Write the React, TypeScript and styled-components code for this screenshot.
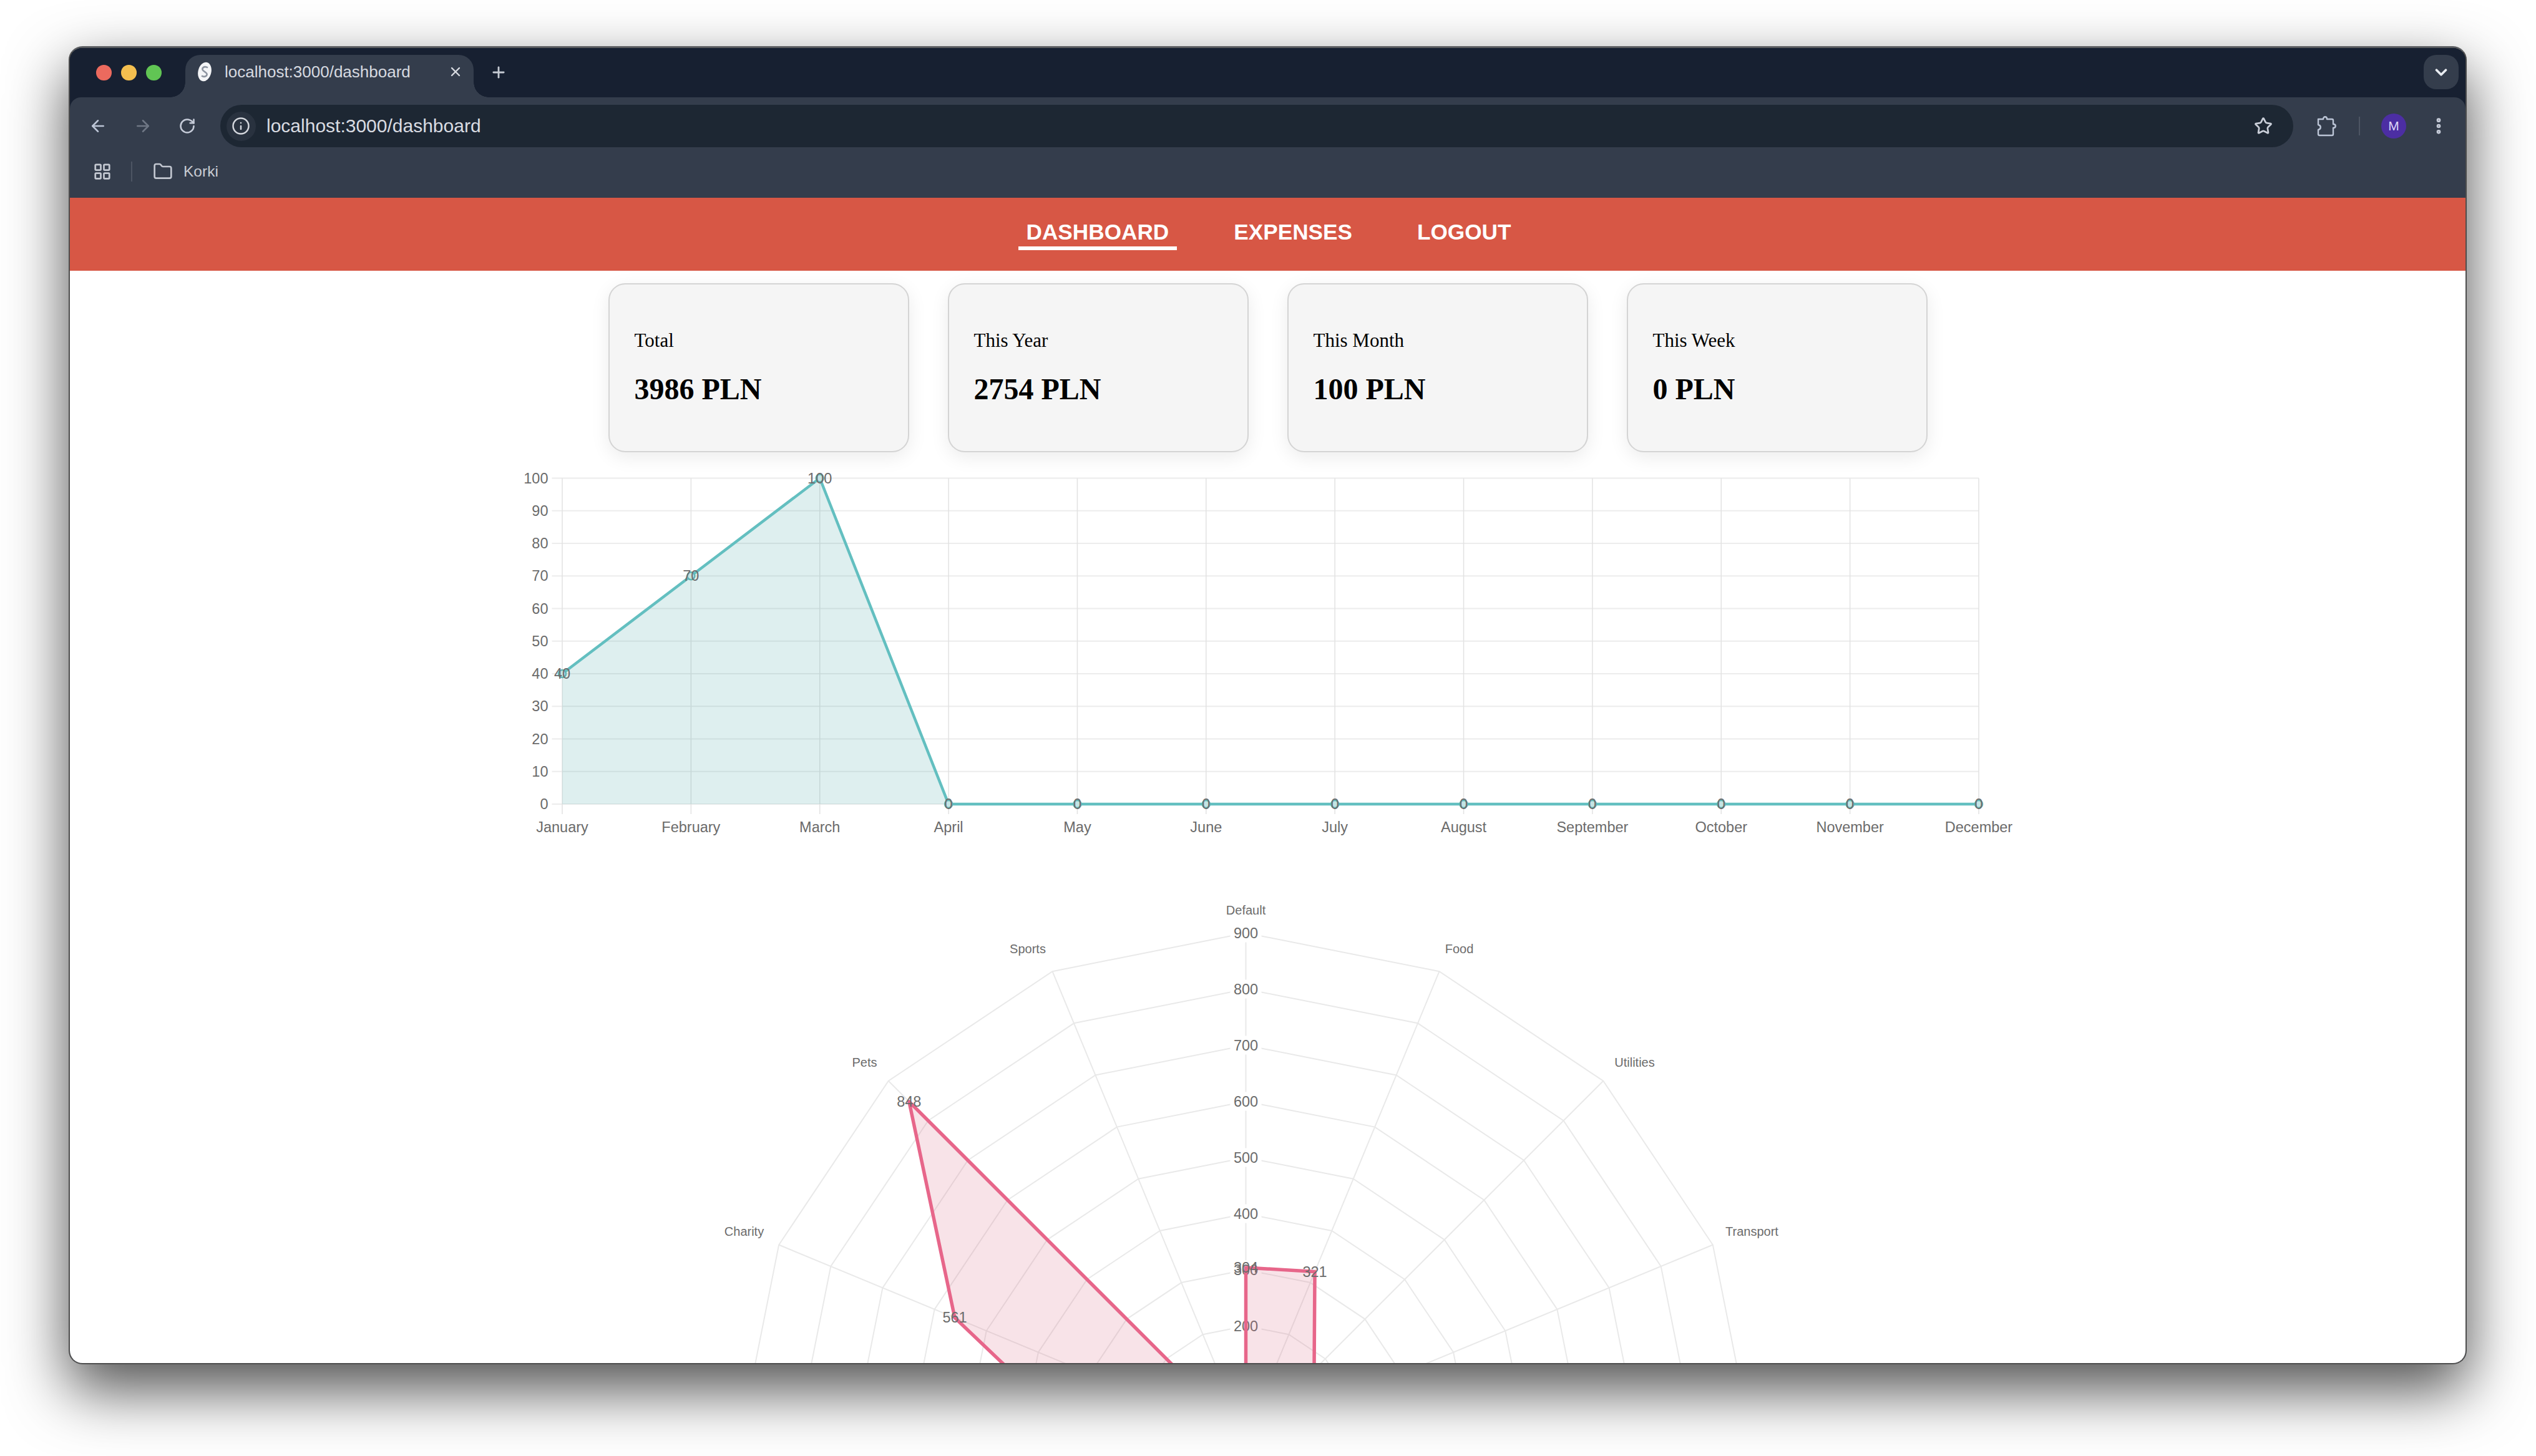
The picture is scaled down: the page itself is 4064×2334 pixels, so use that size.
import { styled, createGlobalStyle } from "styled-components";
import {
  ArrowLeft,
  ArrowRight,
  ChevronDown,
  EllipsisVertical,
  Folder,
  Info,
  LayoutGrid,
  Plus,
  RotateCw,
  Star,
  X,
} from "lucide-react";

const months = [
  "January",
  "February",
  "March",
  "April",
  "May",
  "June",
  "July",
  "August",
  "September",
  "October",
  "November",
  "December",
];
const monthly = [40, 70, 100, 0, 0, 0, 0, 0, 0, 0, 0, 0];
const stats = [
  { label: "Total", value: "3986 PLN" },
  { label: "This Year", value: "2754 PLN" },
  { label: "This Month", value: "100 PLN" },
  { label: "This Week", value: "0 PLN" },
];

// line chart geometry, in page pixels
const plotLeft = 900.5;
const plotRight = 3170.5;
const plotTop = 766.5;
const plotBottom = 1289;
const xAt = (i: number) => plotLeft + ((plotRight - plotLeft) * i) / 11;
const yAt = (v: number) => plotBottom - ((plotBottom - plotTop) * v) / 100;

// radar geometry, the window cuts it off at y = 2185
const cx = 1996;
const cy = 2305.5;
const perUnit = 0.9;
const spokes = 16;
const radarCut = 2170;
const radarPoint = (spoke: number, value: number) => {
  const a = (spoke * 2 * Math.PI) / spokes;
  return {
    x: cx + Math.sin(a) * value * perUnit,
    y: cy - Math.cos(a) * value * perUnit,
  };
};
const radarValues = [304, 321, 172, 0, 0, 0, 0, 0, 0, 0, 0, 0, 293, 561, 848, 0];
const radarShape = radarValues
  .map((v, i) => {
    const p = radarPoint(i, v);
    return `${p.x},${p.y}`;
  })
  .join(" ");
const ringPoints = (value: number) =>
  Array.from({ length: spokes }, (_, i) => {
    const p = radarPoint(i, value);
    return `${p.x},${p.y}`;
  }).join(" ");
const radarTicks = [100, 200, 300, 400, 500, 600, 700, 800, 900];
const radarLabels = [
  { name: "Default", x: 1996, y: 1459 },
  { name: "Food", x: 2338, y: 1521 },
  { name: "Utilities", x: 2619, y: 1703 },
  { name: "Transport", x: 2807, y: 1973.5 },
  { name: "Charity", x: 1192, y: 1973.5 },
  { name: "Pets", x: 1385, y: 1703 },
  { name: "Sports", x: 1646.5, y: 1521 },
];

const App = () => {
  return (
    <Page>
      <GlobalStyle />
      <BrowserWindow>
        <TitleStrip>
          <Lights>
            <Light $color="#ec6a5e" />
            <Light $color="#f4bf4f" />
            <Light $color="#61c554" />
          </Lights>
          <Tab>
            <svg width="24" height="32" viewBox="0 0 24 32">
              <ellipse cx="12" cy="16" rx="10.5" ry="15.5" fill="#f4f5f7" transform="rotate(14 12 16)" />
              <path
                d="M17 9.5C11 6 5.5 11 10 14.5L14 17.5C18.5 21 13 26 7 22.5"
                fill="none"
                stroke="#8d94a0"
                strokeWidth="2.6"
              />
            </svg>
            <TabTitle>localhost:3000/dashboard</TabTitle>
            <TabClose>
              <X size={24} strokeWidth={2.4} />
            </TabClose>
          </Tab>
          <NewTab>
            <Plus size={28} strokeWidth={2.4} />
          </NewTab>
          <TabSearch>
            <ChevronDown size={30} strokeWidth={3} />
          </TabSearch>
        </TitleStrip>
        <Toolbar>
          <AddressRow>
            <ToolIcon $color="#bcc5d6" $left={30}>
              <ArrowLeft size={30} strokeWidth={2} />
            </ToolIcon>
            <ToolIcon $color="#6f7785" $left={42}>
              <ArrowRight size={30} strokeWidth={2} />
            </ToolIcon>
            <ToolIcon $color="#c5cbd8" $left={42}>
              <RotateCw size={28} strokeWidth={2.2} />
            </ToolIcon>
            <Omnibox>
              <InfoChip>
                <Info size={30} strokeWidth={2} />
              </InfoChip>
              <Url>localhost:3000/dashboard</Url>
              <ToolIcon $color="#c9ced8" $left={0}>
                <Star size={30} strokeWidth={2.2} />
              </ToolIcon>
            </Omnibox>
            <ToolIcon $color="#bcc5d6" $left={37}>
              <svg width="32" height="36" viewBox="0 0 32 36" fill="none" stroke="currentColor" strokeWidth="2.4">
                <path d="M3 7H11C11 2 17 2 17 7H25C26.5 7 27 8 27 9V15C32 15 32 21 27 21V31C27 32.5 26 33 25 33H5C3.5 33 3 32 3 31V24C8 23 8 17 3 16Z" strokeLinejoin="round" />
              </svg>
            </ToolIcon>
            <VerticalRule $left={36} $height={30} />
            <Avatar>M</Avatar>
            <ToolIcon $color="#c5cbd8" $left={36}>
              <EllipsisVertical size={32} strokeWidth={3} />
            </ToolIcon>
          </AddressRow>
          <BookmarkRow>
            <ToolIcon $color="#c2c7d0" $left={0}>
              <LayoutGrid size={30} strokeWidth={2.2} />
            </ToolIcon>
            <VerticalRule $left={31} $height={32} />
            <ToolIcon $color="#c2c7d0" $left={33}>
              <Folder size={32} strokeWidth={2} />
            </ToolIcon>
            <BookmarkName>Korki</BookmarkName>
          </BookmarkRow>
        </Toolbar>
        <Content>
          <NavBar>
            <NavLink $active>DASHBOARD</NavLink>
            <NavLink>EXPENSES</NavLink>
            <NavLink>LOGOUT</NavLink>
          </NavBar>
          <CardRow>
            {stats.map((s) => (
              <Card key={s.label}>
                <CardLabel>{s.label}</CardLabel>
                <CardValue>{s.value}</CardValue>
              </Card>
            ))}
          </CardRow>
          <LineChart width="2500" height="620" viewBox="781.5 740 2500 620">
            {Array.from({ length: 11 }, (_, i) => (
              <g key={i}>
                <GridLine x1={884} x2={plotRight} y1={yAt(i * 10)} y2={yAt(i * 10)} />
                <ChartText x={878} y={yAt(i * 10)} textAnchor="end" dominantBaseline="central">
                  {i * 10}
                </ChartText>
              </g>
            ))}
            {months.map((m, i) => (
              <g key={m}>
                <GridLine $vertical x1={xAt(i)} x2={xAt(i)} y1={plotTop} y2={1305} />
                <ChartText x={xAt(i)} y={1326} textAnchor="middle" dominantBaseline="central">
                  {m}
                </ChartText>
              </g>
            ))}
            <polygon
              points={`${plotLeft},${plotBottom} ${monthly.map((v, i) => `${xAt(i)},${yAt(v)}`).join(" ")}`}
              fill="rgba(90,175,175,0.2)"
            />
            <polyline
              points={monthly.map((v, i) => `${xAt(i)},${yAt(v)}`).join(" ")}
              fill="none"
              stroke="#63bfc0"
              strokeWidth="4.5"
            />
            {monthly.map((v, i) => (
              <g key={i}>
                <circle cx={xAt(i)} cy={yAt(v)} r="6" fill="#c4e4e4" stroke="#5fb5b6" strokeWidth="2.5" />
                <ChartText x={xAt(i)} y={yAt(v)} textAnchor="middle" dominantBaseline="central">
                  {v}
                </ChartText>
              </g>
            ))}
          </LineChart>
          <RadarChart width="2500" height="800" viewBox="781.5 1420 2500 800">
            {Array.from({ length: spokes }, (_, i) => {
              const p = radarPoint(i, 900);
              return <RadarGrid as="line" key={i} x1={cx} y1={cy} x2={p.x} y2={p.y} />;
            })}
            {radarTicks.map((t) => (
              <RadarGrid as="polygon" key={t} points={ringPoints(t)} fill="none" />
            ))}
            {radarTicks
              .filter((t) => cy - t * perUnit < radarCut)
              .map((t) => (
                <g key={t}>
                  <rect x={cx - 25} y={cy - t * perUnit - 15} width="50" height="30" fill="#fff" />
                  <ChartText x={cx} y={cy - t * perUnit} textAnchor="middle" dominantBaseline="central">
                    {t}
                  </ChartText>
                </g>
              ))}
            {radarLabels.map((l) => (
              <PointLabel key={l.name} x={l.x} y={l.y} textAnchor="middle" dominantBaseline="central">
                {l.name}
              </PointLabel>
            ))}
            <polygon
              points={radarShape}
              fill="rgba(215,100,125,0.18)"
              stroke="#e7668a"
              strokeWidth="5.5"
              strokeLinejoin="round"
            />
            {radarValues.map((v, i) => {
              const p = radarPoint(i, v);
              if (v === 0 || p.y > radarCut) return null;
              return (
                <ChartText key={i} x={p.x} y={p.y} textAnchor="middle" dominantBaseline="central">
                  {v}
                </ChartText>
              );
            })}
          </RadarChart>
        </Content>
      </BrowserWindow>
    </Page>
  );
};

export default App;

const GlobalStyle = createGlobalStyle`
  html, body {
    margin: 0;
    padding: 0;
    background: #ffffff;
  }
`;

const Page = styled.div`
  width: 4064px;
  height: 2334px;
  box-sizing: border-box;
  padding: 74px 111px 147px 110px;
  overflow: hidden;
  font-family: "Liberation Sans", Arial, sans-serif;
`;

const BrowserWindow = styled.div`
  display: flex;
  flex-direction: column;
  height: 2113px;
  box-sizing: border-box;
  border: 2px solid #4d4d4d;
  border-top: 3px solid #5a5c60;
  border-radius: 22px;
  overflow: hidden;
  background: #172031;
  box-shadow: 0 40px 96px 2px rgba(0, 0, 0, 0.68);
`;

const TitleStrip = styled.div`
  display: flex;
  align-items: flex-end;
  height: 79px;
  flex-shrink: 0;
  background: #172031;
`;

const Lights = styled.div`
  display: flex;
  align-self: flex-start;
  gap: 15.5px;
  margin: 27px 0 0 42px;
`;

const Light = styled.span<{ $color: string }>`
  width: 24.5px;
  height: 24.5px;
  border-radius: 50%;
  background: ${(p) => p.$color};
`;

const Tab = styled.div`
  position: relative;
  display: flex;
  align-items: center;
  box-sizing: border-box;
  width: 462px;
  height: 68px;
  margin-left: 38.5px;
  padding: 0 0 14px 19px;
  border-radius: 24px 24px 0 0;
  background: #343d4c;

  &::before,
  &::after {
    content: "";
    position: absolute;
    bottom: 0;
    width: 24px;
    height: 24px;
  }
  &::before {
    left: -24px;
    background: radial-gradient(circle at 0 0, #172031 23.5px, #343d4c 24px);
  }
  &::after {
    right: -24px;
    background: radial-gradient(circle at 100% 0, #172031 23.5px, #343d4c 24px);
  }
`;

const TabTitle = styled.span`
  margin-left: 20px;
  font-size: 26px;
  color: #d7dae0;
`;

const TabClose = styled.span`
  display: flex;
  margin-left: 60px;
  color: #d7dae0;
`;

const NewTab = styled.span`
  display: flex;
  align-self: flex-start;
  margin: 25px 0 0 26px;
  color: #c5cad3;
`;

const TabSearch = styled.div`
  display: flex;
  align-items: center;
  justify-content: center;
  align-self: flex-start;
  width: 56px;
  height: 55px;
  margin: 11px 11px 0 auto;
  border-radius: 20px;
  background: #343d4c;
  color: #e8ebf0;
`;

const Toolbar = styled.div`
  flex-shrink: 0;
  height: 161px;
  box-sizing: border-box;
  padding-top: 12px;
  border-radius: 18px 18px 0 0;
  background: #343d4c;
`;

const AddressRow = styled.div`
  display: flex;
  align-items: center;
  height: 68px;
  padding-right: 27px;
`;

const ToolIcon = styled.span<{ $color: string; $left: number }>`
  display: flex;
  flex-shrink: 0;
  margin-left: ${(p) => p.$left}px;
  color: ${(p) => p.$color};
`;

const Omnibox = styled.div`
  display: flex;
  flex: 1;
  align-items: center;
  height: 68px;
  margin-left: 39px;
  padding: 0 33px 0 9.5px;
  border-radius: 34px;
  background: #1d2733;
`;

const InfoChip = styled.span`
  display: flex;
  align-items: center;
  justify-content: center;
  width: 47px;
  height: 47px;
  border-radius: 50%;
  background: #29323f;
  color: #d3d6dc;
`;

const Url = styled.span`
  flex: 1;
  margin-left: 17.5px;
  font-size: 30px;
  color: #d9dce2;
`;

const VerticalRule = styled.span<{ $left: number; $height: number }>`
  flex-shrink: 0;
  width: 2px;
  height: ${(p) => p.$height}px;
  margin-left: ${(p) => p.$left}px;
  background: #4d5563;
`;

const Avatar = styled.span`
  display: flex;
  flex-shrink: 0;
  align-items: center;
  justify-content: center;
  width: 40px;
  height: 40px;
  margin-left: 34px;
  border-radius: 50%;
  background: #4c2ea3;
  font-size: 21px;
  color: #ded4f7;
`;

const BookmarkRow = styled.div`
  display: flex;
  align-items: center;
  height: 78px;
  padding-left: 37px;
`;

const BookmarkName = styled.span`
  margin-left: 17px;
  font-size: 24.5px;
  color: #c8ccd3;
`;

const Content = styled.main`
  display: flex;
  flex-direction: column;
  align-items: center;
  flex: 1;
  min-height: 0;
  overflow: hidden;
  background: #ffffff;
`;

const NavBar = styled.nav`
  display: flex;
  align-items: center;
  justify-content: center;
  flex-shrink: 0;
  gap: 78px;
  width: 100%;
  height: 117px;
  padding-left: 3px;
  box-sizing: border-box;
  background: #d75745;
`;

const NavLink = styled.a<{ $active?: boolean }>`
  padding: 2px 13px 3.5px;
  border-bottom: 6px solid ${(p) => (p.$active ? "#ffffff" : "transparent")};
  font-size: 35.2px;
  font-weight: 700;
  line-height: 40px;
  color: #ffffff;
`;

const CardRow = styled.section`
  display: flex;
  flex-shrink: 0;
  gap: 62px;
  margin-top: 20px;
`;

const Card = styled.article`
  display: flex;
  flex-direction: column;
  box-sizing: border-box;
  width: 482px;
  height: 271px;
  padding: 72px 40px 0;
  border: 2px solid #d4d4d4;
  border-radius: 27px;
  background: #f5f5f5;
  box-shadow: 0 8px 30px rgba(0, 0, 0, 0.08);
  font-family: "Liberation Serif", "Times New Roman", serif;
  color: #000000;
`;

const CardLabel = styled.span`
  font-size: 31px;
  line-height: 36px;
`;

const CardValue = styled.strong`
  margin-top: 32px;
  font-size: 48px;
  line-height: 56px;
`;

const LineChart = styled.svg`
  display: block;
  flex-shrink: 0;
  margin-top: 15px;
`;

const RadarChart = styled.svg`
  display: block;
  flex-shrink: 0;
  margin-top: 60px;
`;

const GridLine = styled.line<{ $vertical?: boolean }>`
  stroke: ${(p) => (p.$vertical ? "#e2e2e2" : "#ececec")};
  stroke-width: ${(p) => (p.$vertical ? 1.5 : 2)};
`;

const RadarGrid = styled.line`
  stroke: #e9e9e9;
  stroke-width: 2;
`;

const ChartText = styled.text`
  font-family: "Liberation Sans", Arial, sans-serif;
  font-size: 23.5px;
  fill: #6b6b6b;
`;

const PointLabel = styled.text`
  font-family: "Liberation Sans", Arial, sans-serif;
  font-size: 20px;
  fill: #6b6b6b;
`;
